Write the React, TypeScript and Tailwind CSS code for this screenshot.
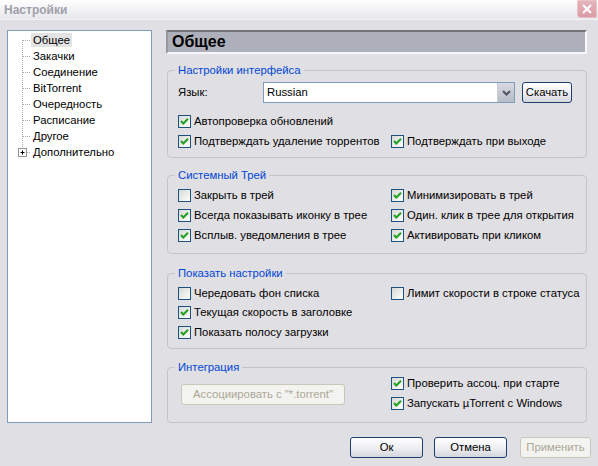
import React from "react";

function Check({ checked }: { checked: boolean }) {
  return (
    <span className="w-[13px] h-[13px] shrink-0 border border-[#1c5180] bg-gradient-to-br from-[#d8d8d4] to-[#ffffff] flex items-center justify-center">
      {checked && (
        <svg width="11" height="11" viewBox="0 0 11 11">
          <path d="M2 5 L4.3 7.5 L9 2.8" stroke="#21a121" strokeWidth="2" fill="none" />
        </svg>
      )}
    </span>
  );
}

function Cb({ label, checked, className = "" }: { label: string; checked: boolean; className?: string }) {
  return (
    <div className={`flex items-center gap-[3px] ${className}`}>
      <Check checked={checked} />
      <span className="whitespace-nowrap">{label}</span>
    </div>
  );
}

function Group({ title, className = "", children }: { title: string; className?: string; children?: React.ReactNode }) {
  return (
    <div className={`border border-[#c5c5c9] rounded-[4px] ml-[1px] w-[420px] ${className}`}>
      <div className="-mt-[7px] ml-[7px] px-[3px] w-fit h-[13px] leading-[13px] bg-[#e0dfe3] text-[#0046d5]">{title}</div>
      {children}
    </div>
  );
}

function Btn({ label, w, disabled = false, className = "" }: { label: string; w: string; disabled?: boolean; className?: string }) {
  return (
    <div
      className={`${w} h-[21px] rounded-[3px] border flex items-center justify-center whitespace-nowrap ${
        disabled
          ? "border-[#c9c7ba] bg-[#f3f3ef] text-[#aca899]"
          : "border-[#1c3f70] bg-gradient-to-b from-[#ffffff] via-[#f0f0f4] to-[#d4d6de] text-black"
      } ${className}`}
    >
      {label}
    </div>
  );
}

const treeItems = ["Общее", "Закачки", "Соединение", "BitTorrent", "Очередность", "Расписание", "Другое", "Дополнительно"];

function TreeRow({ label, idx }: { label: string; idx: number }) {
  const first = idx === 0;
  const last = idx === treeItems.length - 1;
  return (
    <div className="flex h-[16px] items-center">
      <svg width="23" height="16" className="shrink-0">
        {!last && (
          <line x1="14.5" y1={first ? 8 : 0} x2="14.5" y2="16" stroke="#a8a8a8" strokeDasharray="1 1" />
        )}
        {last && <line x1="14.5" y1="0" x2="14.5" y2="3" stroke="#a8a8a8" strokeDasharray="1 1" />}
        <line x1={last ? 19 : 15} y1="8.5" x2="23" y2="8.5" stroke="#a8a8a8" strokeDasharray="1 1" />
        {last && (
          <g>
            <rect x="10.5" y="4.5" width="8" height="8" fill="#fff" stroke="#919191" />
            <line x1="12.5" y1="8.5" x2="16.5" y2="8.5" stroke="#000" />
            <line x1="14.5" y1="6.5" x2="14.5" y2="10.5" stroke="#000" />
          </g>
        )}
      </svg>
      <span className={`px-[2px] h-[14px] leading-[14px] ${first ? "bg-[#e3e3e3]" : ""}`}>{label}</span>
    </div>
  );
}

export default function App() {
  return (
    <div className="w-[598px] h-[466px] bg-[#e0dfe3] flex flex-col text-[11.3px] text-black font-['Liberation_Sans',Arial,sans-serif] overflow-hidden">
      {/* Title bar */}
      <div className="h-[20px] shrink-0 flex items-start justify-between bg-gradient-to-b from-[#ffffff] to-[#e6e6ec] border-b border-[#f4f4f6]">
        <div className="pl-[4px] pt-[3px] font-bold text-[12px] text-[#a0a0aa] leading-[14px]">Настройки</div>
        <div className="w-[20px] h-[18px] mr-[1px] rounded-bl-[3px] bg-gradient-to-b from-[#e6b5bc] to-[#d99aa5] border border-[#e8c4c9] flex items-center justify-center">
          <svg width="12" height="12" viewBox="0 0 12 12">
            <path d="M2 2 L10 10 M10 2 L2 10" stroke="#ffffff" strokeWidth="2" />
          </svg>
        </div>
      </div>

      {/* Body */}
      <div className="flex pt-[10px] pl-[7px]">
        {/* Tree */}
        <div className="w-[145px] h-[393px] shrink-0 bg-white border border-[#7f9db9] pt-[1px]">
          {treeItems.map((t, i) => (
            <TreeRow key={t} label={t} idx={i} />
          ))}
        </div>

        {/* Right column */}
        <div className="ml-[14px] w-[421px] flex flex-col">
          <div className="h-[24px] bg-[#adafbb] border-t-[2px] border-l-[2px] border-b-[2px] border-r-[2px] border-t-[#747478] border-l-[#98989e] border-b-[#f8f8fa] border-r-[#f8f8fa] flex items-center pl-[4px]">
            <span className="font-bold text-[16px] leading-[20px]">Общее</span>
          </div>

          <Group title="Настройки интерфейса" className="mt-[16px] h-[88px]">
            <div className="flex items-center mt-[5px] pl-[10px]">
              <div className="w-[85px]">Язык:</div>
              <div className="w-[252px] h-[21px] bg-white border border-[#7f9db9] flex items-center">
                <span className="flex-1 pl-[3px]">Russian</span>
                <div className="w-[17px] h-[19px] bg-gradient-to-b from-[#d8dae2] to-[#b8bcc8] border-l border-[#c8cad4] flex items-center justify-center">
                  <svg width="9" height="6" viewBox="0 0 9 6">
                    <path d="M1 1 L4.5 4.5 L8 1" stroke="#4d5566" strokeWidth="2" fill="none" />
                  </svg>
                </div>
              </div>
              <Btn label="Скачать" w="w-[50px]" className="ml-[7px]" />
            </div>
            <div className="pl-[10px] mt-[8px]">
              <Cb label="Автопроверка обновлений" checked className="h-[20px]" />
              <div className="flex h-[21px] items-center">
                <Cb label="Подтверждать удаление торрентов" checked className="w-[213px]" />
                <Cb label="Подтверждать при выходе" checked />
              </div>
            </div>
          </Group>

          <Group title="Системный Трей" className="mt-[17px] h-[79px]">
            <div className="pl-[10px] mt-[4px] grid grid-cols-[213px_1fr] grid-rows-[19px_20px_20px]">
              <Cb label="Закрыть в трей" checked={false} />
              <Cb label="Минимизировать в трей" checked />
              <Cb label="Всегда показывать иконку в трее" checked />
              <Cb label="Один. клик в трее для открытия" checked />
              <Cb label="Всплыв. уведомления в трее" checked />
              <Cb label="Активировать при кликом" checked />
            </div>
          </Group>

          <Group title="Показать настройки" className="mt-[19px] h-[76px]">
            <div className="pl-[10px] mt-[3px] grid grid-cols-[213px_1fr] grid-rows-[20px_19px_20px]">
              <Cb label="Чередовать фон списка" checked={false} />
              <Cb label="Лимит скорости в строке статуса" checked={false} />
              <Cb label="Текущая скорость в заголовке" checked />
              <div />
              <Cb label="Показать полосу загрузки" checked />
            </div>
          </Group>

          <Group title="Интеграция" className="mt-[18px] h-[56px]">
            <div className="flex">
              <div className="w-[223px] pl-[13px] pt-[10px]">
                <Btn label={'Ассоциировать с "*.torrent"'} w="w-[164px]" disabled />
              </div>
              <div className="flex flex-col">
                <Cb label="Проверить ассоц. при старте" checked className="h-[19px]" />
                <Cb label="Запускать µTorrent с Windows" checked className="h-[21px]" />
              </div>
            </div>
          </Group>
        </div>
      </div>

      {/* Bottom buttons */}
      <div className="flex justify-end pr-[7px] mt-[14px]">
        <Btn label="Ок" w="w-[73px]" />
        <Btn label="Отмена" w="w-[73px]" className="ml-[11px]" />
        <Btn label="Применить" w="w-[71px]" disabled className="ml-[13px]" />
      </div>
    </div>
  );
}
